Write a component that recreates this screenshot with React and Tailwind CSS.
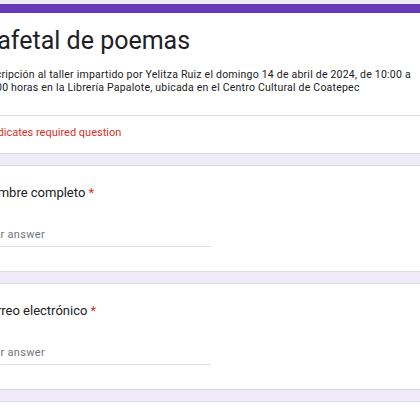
// Google Form, cropped at the left edge as in the screenshot
const Question = ({ label }) => {
  return (
    <div className="rounded-lg border border-[#dadce0] bg-white px-6 pt-[17px] pb-[24px]">
      <p className="text-[13px] leading-5 text-[#202124]">
        {label} <span className="text-[#d93025]">*</span>
      </p>
      <div className="mt-[22px] w-[230px] border-b border-[#e0e0e0] pb-[1px]">
        <p className="text-[11px] leading-5 tracking-[0.3px] text-[#70757a]">Your answer</p>
      </div>
    </div>
  );
};

const App = () => {
  return (
    <div
      className="h-[420px] w-[420px] overflow-hidden bg-[#efebf8] pt-1"
      style={{ fontFamily: "Roboto, 'Noto Sans', sans-serif" }}
    >
      <div className="ml-[-44px] flex w-[500px] flex-col gap-[11px]">
        {/* Header card with purple top bar */}
        <div className="overflow-hidden rounded-lg border-x border-b border-[#dadce0] bg-white">
          <div className="h-[9px] bg-[#673ab7]"></div>
          <div className="px-6 pt-[12px] pb-[21px]">
            <h1 className="text-[25px] leading-8 text-[#202124]">Cafetal de poemas</h1>
            <p className="mt-[12px] whitespace-nowrap text-[10.5px] leading-[12.5px] tracking-[0.22px] text-[#202124]">
              Inscripción al taller impartido por Yelitza Ruiz el domingo 14 de abril de 2024, de 10:00 a
              <br />
              12:00 horas en la Librería Papalote, ubicada en el Centro Cultural de Coatepec
            </p>
          </div>
          <div className="border-t border-[#dadce0] px-6 pt-[9px] pb-[12px]">
            <p className="text-[11px] leading-4 text-[#d93025]">* Indicates required question</p>
          </div>
        </div>

        <Question label="Nombre completo" />
        <Question label="Correo electrónico" />

        <div className="h-24 rounded-lg border border-[#dadce0] bg-white"></div>
      </div>
    </div>
  );
};

export default App;
